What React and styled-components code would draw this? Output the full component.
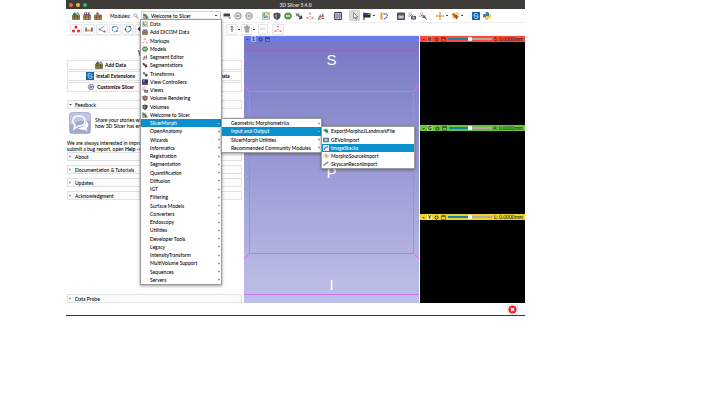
import React from "react";
import styled, { createGlobalStyle, css } from "styled-components";

const Global = createGlobalStyle`
  *, *::before, *::after { box-sizing: border-box; }
  body { margin: 0; background: #fff; color: #000; font: 500 5px/6px Lato, "Noto Sans", sans-serif; }
  button, input { font: inherit; color: inherit; margin: 0; padding: 0; border: 0; background: none; }
  ul { margin: 0; padding: 0; list-style: none; }
  svg { display: block; flex: none; }
  p { margin: 0; }
`;

const Page = styled.div`
  min-height: 100vh;
  display: grid;
  padding: 0 195px 89px 66px;
`;
const Window = styled.div`
  display: grid;
  grid-template-rows: 9px 14px 13px 1fr 12px;
  grid-template-columns: minmax(0, 1fr);
  border-bottom: 1px solid #3b352f;
`;
const TitleBar = styled.header`
  position: relative;
  display: flex;
  align-items: center;
  justify-content: center;
  background: #3d3c39;
  color: #d4d3cf;
  font-weight: 700;
`;
const Lights = styled.div`
  position: absolute;
  left: 3px;
  display: flex;
  gap: 3px;
`;
const Light = styled.i`
  width: 4px;
  height: 4px;
  border-radius: 50%;
  background: ${(p) => p.$color};
`;
const Toolbar = styled.div`
  display: flex;
  align-items: center;
  padding-left: ${(p) => p.$inset}px;
  gap: ${(p) => p.$gap}px;
  border-bottom: 1px solid #f0f0f0;
`;
const Group = styled.div`
  display: flex;
  align-items: center;
  gap: ${(p) => p.$gap ?? 2}px;
  margin-right: ${(p) => p.$after ?? 0}px;
`;
const ModulesLabel = styled.span`
  width: 21px;
`;
const Tool = styled.button`
  display: grid;
  place-items: center;
  flex: none;
  width: ${(p) => p.$width ?? 9}px;
  height: 11px;
  border-radius: 1px;
  ${(p) => p.$pressed && css`background: #dedede; border: 1px solid #d2d2d2;`}
  ${(p) => p.$framed && css`border: 1px solid #e6e6e6; background: #fdfdfd;`}
`;
const Caret = styled.i`
  width: 2px;
  height: 1px;
  background: #444;
`;
const ModulePicker = styled.div`
  position: relative;
  width: 80px;
`;
const PickerButton = styled.button`
  display: flex;
  align-items: center;
  gap: 2px;
  width: 100%;
  height: 9px;
  padding: 0 3px 0 1px;
  border: 1px solid #d5d5d5;
  span { flex: 1; text-align: left; }
`;
const Menu = styled.ul`
  position: absolute;
  z-index: ${(p) => (p.$sub ? 3 : 2)};
  left: ${(p) => (p.$sub ? "100%" : "-1px")};
  top: ${(p) => (p.$sub ? "-1px" : "8px")};
  width: ${(p) => p.$width}px;
  height: ${(p) => p.$height}px;
  display: grid;
  grid-auto-rows: minmax(0, 1fr);
  border: 1px solid #9b9b9b;
  background: #fff;
  box-shadow: 0 1px 3px rgba(0, 0, 0, 0.4);
`;
const Row = styled.li`
  position: relative;
  display: grid;
`;
const MenuButton = styled.button`
  display: grid;
  grid-template-columns: 6px 1fr 2px;
  align-items: center;
  column-gap: 2px;
  min-height: 0;
  height: 100%;
  padding: 0 1px;
  text-align: left;
  white-space: nowrap;
  color: ${(p) => (p.$active ? "#fff" : "#000")};
  background: ${(p) => (p.$active ? "#0a90cd" : "transparent")};
`;
const Main = styled.main`
  display: grid;
  grid-template-columns: 177fr 175fr 105fr;
  column-gap: 1px;
  min-height: 0;
`;
const Panel = styled.aside`
  display: flex;
  flex-direction: column;
  min-width: 0;
  overflow: hidden;
  padding: 13px 1px 0 1px;
`;
const Heading = styled.h1`
  margin: 0 0 3px;
  font: 700 8px/8px Lato, sans-serif;
  color: #4a4a9c;
  text-align: center;
`;
const ButtonGrid = styled.div`
  display: grid;
  grid-template-columns: 1fr 1fr;
  gap: 1px;
  margin-bottom: 8px;
`;
const PushButton = styled.button`
  display: flex;
  align-items: center;
  justify-content: center;
  gap: 2px;
  height: 10px;
  border: 1px solid #e2e2e2;
  font-weight: 700;
  white-space: nowrap;
`;
const Section = styled.button`
  display: flex;
  align-items: center;
  gap: 3px;
  flex: none;
  height: 9px;
  padding-left: 1px;
  margin-bottom: ${(p) => p.$after ?? 4}px;
  margin-top: ${(p) => (p.$last ? "auto" : "0")};
  border: 1px solid #e2e2e2;
  background: #fcfcfc;
`;
const Story = styled.div`
  display: flex;
  gap: 4px;
  align-items: center;
  padding-left: 2px;
  margin: 3px 0 6px;
  white-space: nowrap;
`;
const Note = styled.p`
  white-space: nowrap;
`;
const View3D = styled.section`
  display: grid;
  grid-template-rows: 6px 1fr;
  background: linear-gradient(#7677c3, #bfc0e8);
`;
const ViewBar = styled.header`
  display: flex;
  align-items: center;
  gap: 2px;
  padding: 0 2px;
  font-weight: 500;
  background: ${(p) => p.$color};
  color: #222;
  overflow: hidden;
  white-space: nowrap;
`;
const Tag = styled.b`
  padding: 0 1px;
  background: ${(p) => p.$color};
  color: ${(p) => p.$ink ?? "#222"};
  line-height: 6px;
`;
const Scene = styled.div`
  position: relative;
  svg { position: absolute; inset: 0; width: 100%; height: 100%; }
`;
const Letter = styled.span`
  position: absolute;
  left: 0;
  right: 0;
  top: ${(p) => p.$top}%;
  text-align: center;
  color: #fff;
  font: 15px/16px "Liberation Sans", sans-serif;
`;
const Slices = styled.div`
  display: grid;
  grid-template-rows: repeat(3, 1fr);
  min-width: 0;
`;
const Slice = styled.section`
  display: grid;
  grid-template-rows: 6px 1fr;
  background: #000;
  min-width: 0;
`;
const Slider = styled.input`
  appearance: none;
  flex: 1;
  min-width: 0;
  height: 6px;
  &::-webkit-slider-runnable-track {
    height: 2px;
    background: linear-gradient(90deg, #1583b0 50%, #b5aaa2 50%);
  }
  &::-webkit-slider-thumb {
    appearance: none;
    width: 4px;
    height: 4px;
    margin-top: -1px;
    border-radius: 1px;
    background: #fff;
    border: 0;
  }
`;
const Status = styled.footer`
  display: flex;
  align-items: center;
  justify-content: flex-end;
  padding-right: 7px;
`;

const drawings = {
  crate: (
    <>
      <path d="M1 6h14v9H1z" fill="#a98a4c" stroke="#3f3a22" />
      <path d="M1 9h14M1 12h14M5 6v9M11 6v9" stroke="#4d4020" />
      <path d="M4 1h3v2h2v3H7v2H4V6H2V3h2z" fill="#277b48" />
      <path d="M9 4l3-3 2 5" stroke="#49432b" fill="#bda878" />
    </>
  ),
  dcm: (
    <>
      <path d="M1 6h14v9H1z" fill="#b99a62" stroke="#3f2f32" />
      <path d="M1 10h14M5 6v9M11 6v9" stroke="#4d3030" />
      <path d="M2 1h12v5H2z" fill="#75596e" />
      <path d="M4 3h2m2 0h2m2 0h1" stroke="#fff" strokeWidth="2" />
    </>
  ),
  crateRed: (
    <>
      <path d="M1 6h14v9H1z" fill="#b58850" stroke="#4b3522" />
      <path d="M1 10h14M5 6v9M11 6v9" stroke="#54351f" />
      <path d="M7 0l4 4H9v4H5V4H3z" fill="#b35b3b" />
    </>
  ),
  lens: (
    <>
      <circle cx="6" cy="6" r="4" fill="#d9efff" stroke="#83afd4" strokeWidth="2" />
      <path d="M9 9l5 5" stroke="#b28869" strokeWidth="3" />
    </>
  ),
  slicer: (
    <>
      <path d="M1 1c8 0 14 6 14 14h-4C11 9 7 5 1 5z" fill="#76b44a" />
      <path d="M1 4c6 0 11 5 11 11H8c0-4-3-7-7-7z" fill="#2572b5" />
      <path d="M1 8c4 0 7 3 7 7H1z" fill="#e59a3b" />
      <path d="M1 1v14h5" fill="none" stroke="#555" />
    </>
  ),
  history: (
    <>
      <path d="M1 3h13v6H1z" fill="#444" />
      <path d="M1 12h9" stroke="#ccc" strokeWidth="1" />
      <path d="M11 11h5l-2 3z" fill="#333" />
    </>
  ),
  back: (
    <>
      <circle cx="8" cy="8" r="6.5" fill="#f4f4f4" stroke="#8d8d8d" strokeWidth="2" />
      <path d="M12 8H5m3-3L5 8l3 3" fill="none" stroke="#888" strokeWidth="2" />
    </>
  ),
  forward: (
    <>
      <circle cx="8" cy="8" r="6.5" fill="#f4f4f4" stroke="#8d8d8d" strokeWidth="2" />
      <path d="M4 8h7M8 5l3 3-3 3" fill="none" stroke="#888" strokeWidth="2" />
    </>
  ),
  data: (
    <>
      <path d="M1 1h14v14H1z" fill="#dce8e2" stroke="#7b8d86" />
      <path d="M3 3h3v3H3zM6 9h3v3H6z" fill="#4d9254" />
      <path d="M4 5v6h4M8 7l5 5" stroke="#477ab0" fill="none" strokeWidth="2" />
      <path d="M9 2h5v4H9z" fill="#e4cf58" />
    </>
  ),
  shield: (
    <>
      <path d="M1 3l7-2 7 2v5c0 4-3 6-7 8-4-2-7-4-7-8z" fill="#4b4f51" />
      <path d="M4 5l4-1v9C5 11 4 9 4 8z" fill="#8b9092" />
    </>
  ),
  volr: (
    <>
      <path d="M1 3l7-2 7 2v5c0 4-3 6-7 8-4-2-7-4-7-8z" fill="#8b4a3e" />
      <circle cx="8" cy="7" r="4" fill="#e3b199" />
      <path d="M8 4v6" stroke="#395c8d" strokeWidth="3" />
    </>
  ),
  model: (
    <>
      <path d="M4 2h8l4 6-4 6H4L0 8z" fill="#5c9a54" stroke="#3c6a38" />
      <path d="M4 6h8v4H4z" fill="#b6dbab" />
    </>
  ),
  transform: (
    <>
      <path d="M1 3l7-1 1 6-6 1z" fill="#8a8f90" />
      <path d="M7 8l7-1 1 6-6 2z" fill="#3d4243" />
      <path d="M4 5l7 6" stroke="#777a7c" strokeWidth="3" />
    </>
  ),
  dots: (
    <>
      <circle cx="8" cy="3" r="2.2" fill="#f08080" />
      <circle cx="3" cy="12" r="2.2" fill="#f08080" />
      <circle cx="13" cy="12" r="2.2" fill="#f08080" />
      <path d="M7 9h3M7 13h2" stroke="#e9a3a3" strokeWidth="2" />
    </>
  ),
  dotsRed: (
    <>
      <circle cx="8" cy="4" r="3" fill="#e4213b" />
      <circle cx="3" cy="12" r="3" fill="#e4213b" />
      <circle cx="13" cy="12" r="3" fill="#e4213b" />
    </>
  ),
  editor: (
    <>
      <path d="M2 12l5-8 2 7z" fill="#d8545a" />
      <path d="M8 11l4-10 2 9z" fill="#6280b8" />
      <path d="M2 14h5" stroke="#3a9f58" strokeWidth="3" />
      <path d="M9 13h5" stroke="#c44" strokeWidth="2" />
    </>
  ),
  seg: (
    <>
      <path d="M1 2l6 1 2 5-6 1z" fill="#3a7d49" />
      <path d="M6 7l6-1 3 6-6 3z" fill="#a33" />
      <path d="M3 4l9 8" stroke="#222" strokeWidth="2" />
    </>
  ),
  layout: (
    <>
      <path d="M1 1h14v14H1z" fill="#c3c9df" stroke="#43475f" strokeWidth="2" />
      <path d="M1 6h14M1 10h14M6 1v14M11 1v14" stroke="#565e86" />
    </>
  ),
  pointer: <path d="M5 1v12l3-3 2 5 2-1-2-4h4z" fill="#fff" stroke="#333" />,
  flag: (
    <>
      <path d="M1 2h14v9H1z" fill="#18351f" />
      <path d="M2 3h5v4H2z" fill="#3553d0" />
      <path d="M9 3h5v3H9z" fill="#72a63c" />
      <path d="M2 1v15" stroke="#222" strokeWidth="2" />
    </>
  ),
  roi: (
    <>
      <path d="M1 1h4v14H1z" fill="#e79b22" />
      <path d="M7 5c5-4 9 0 7 4s-7 5-7 5" fill="none" stroke="#6b74bd" strokeWidth="3" strokeDasharray="3 1" />
    </>
  ),
  camera: (
    <>
      <path d="M1 2h14v13H1z" fill="#717789" stroke="#464b56" strokeWidth="2" />
      <path d="M1 4h14" stroke="#454a54" strokeWidth="2" />
      <circle cx="5.500" cy="10" r="2" fill="none" stroke="#fff" strokeWidth="1.500" />
      <circle cx="10.500" cy="10" r="2" fill="none" stroke="#fff" strokeWidth="1.500" />
    </>
  ),
  scene: (
    <>
      <path d="M2 10V2h6" fill="none" stroke="#777" />
      <path d="M3 9l4-4 2 3" stroke="#bc4d5b" fill="none" strokeWidth="2" />
      <path d="M6 8h10v7H6z" fill="#5a5c63" />
      <circle cx="11" cy="11" r="2" fill="#c6c9cf" />
    </>
  ),
  restore: (
    <>
      <path d="M2 10V2h6" fill="none" stroke="#777" />
      <path d="M3 9l4-4 2 3" stroke="#bc4d5b" fill="none" strokeWidth="2" />
      <path d="M7 7h6v5H7z" fill="#6b6c78" />
      <path d="M12 11l3 4" stroke="#333" strokeWidth="2" />
    </>
  ),
  cross: <path d="M8 0v16M0 8h16" stroke="#e8a660" strokeWidth="3" />,
  cubes: (
    <>
      <path d="M1 5l5-4 4 4-4 5z" fill="#e2702c" />
      <path d="M6 9l5-4 4 4-4 6z" fill="#c23b25" />
      <path d="M2 10h4v4M10 2h4v4" fill="none" stroke="#e5a82f" strokeWidth="2" />
      <path d="M6 6l4 4" stroke="#3c8a49" strokeWidth="3" />
    </>
  ),
  ext: (
    <>
      <path d="M0 0h16v16H0z" fill="#1565a8" />
      <path d="M4 4c3-2 7-1 8 2M12 12c-3 2-7 1-8-2M4 4v4h4M12 12V8H8" fill="none" stroke="#9edcf5" strokeWidth="2" />
    </>
  ),
  python: (
    <>
      <path d="M5 0h5l2 2v6H6v3H1L0 8l1-4h6V3H5z" fill="#3a78ad" />
      <path d="M11 16H6l-2-2v-3h3V8h5V4h3l1 4-1 4H9v1h2z" fill="#f5c931" />
    </>
  ),
  gear: (
    <>
      <circle cx="8" cy="8" r="5" fill="#dce0ed" stroke="#7a82a8" strokeWidth="3" strokeDasharray="3 1" />
      <circle cx="8" cy="8" r="2" fill="#5c6590" />
    </>
  ),
  line: (
    <>
      <path d="M2 11h12" stroke="#e5ab43" strokeWidth="4" />
      <path d="M2 5v8M14 5v8" stroke="#4d5c9b" strokeWidth="3" />
    </>
  ),
  angle: (
    <>
      <path d="M13 2L3 9l10 5" fill="none" stroke="#89a2cf" strokeWidth="2" />
      <circle cx="13" cy="13" r="2" fill="#d33" />
      <circle cx="3" cy="9" r="2" fill="#d66" />
    </>
  ),
  curve: (
    <>
      <path d="M3 12C1 3 8 1 13 4M13 5c2 6-3 10-9 8" fill="none" stroke="#4d94c4" strokeWidth="2" strokeDasharray="4 1" />
      <circle cx="4" cy="4" r="1.600" fill="#456" />
      <circle cx="12" cy="12" r="1.600" fill="#456" />
    </>
  ),
  closed: (
    <>
      <path d="M4 4c4-3 9-1 10 3s-3 7-7 7-6-6-3-10z" fill="none" stroke="#3f87b5" strokeWidth="2" />
      <circle cx="12" cy="3" r="1.700" fill="#345" />
      <circle cx="3" cy="9" r="1.700" fill="#345" />
    </>
  ),
  plane: <path d="M1 8l7-7 7 7-7 7z" fill="#33383c" />,
  arrows: (
    <>
      <path d="M8 2v12M5 5l3-3 3 3" fill="none" stroke="#777" strokeWidth="2" />
      <path d="M5 9h6" stroke="#999" strokeWidth="2" />
    </>
  ),
  trash: (
    <>
      <path d="M3 5h10l-1 10H4z" fill="#9a9a9a" />
      <path d="M2 4h12M6 2h4" stroke="#777" strokeWidth="2" />
      <path d="M6 7v6M10 7v6" stroke="#ddd" />
    </>
  ),
  ellipsis: <path d="M2 8h3m1 0h3m1 0h2" stroke="#b9b9b9" strokeWidth="2" />,
  viewctl: (
    <>
      <path d="M0 1h16v14H0z" fill="#26356e" />
      <path d="M0 10h16v5H0z" fill="#8f3550" />
      <path d="M3 4h4v3H3z" fill="#c9d1ef" />
    </>
  ),
  plus: (
    <>
      <path d="M7 2v9M1 6h12" stroke="#2e9b49" strokeWidth="4" />
      <path d="M8 8h7l-5 7z" fill="#2b62a0" />
    </>
  ),
  vol: (
    <>
      <path d="M0 2h16v12H0z" fill="#4d7898" />
      <path d="M4 5h8v6H4z" fill="#bdd5df" />
    </>
  ),
  stack: (
    <>
      <path d="M0 0h16v16H0z" fill="#e9e7f1" />
      <path d="M3 13l3-6 4-1 3-4" fill="none" stroke="#7a6f9e" strokeWidth="3" />
    </>
  ),
  source: (
    <>
      <circle cx="8" cy="8" r="6" fill="#f5edd8" stroke="#d8a889" strokeDasharray="4 2" strokeWidth="2" />
      <path d="M8 4v5h3" fill="none" stroke="#666" strokeWidth="2" />
    </>
  ),
  scan: <path d="M2 13l4-6 4-1 4-4" fill="none" stroke="#8c8aa5" strokeWidth="4" />,
};

const Icon = ({ name, size = 8 }) => (
  <svg width={size} height={size} viewBox="0 0 16 16" fill="none" aria-hidden="true">
    {drawings[name]}
  </svg>
);
const Chevron = ({ down }) => (
  <svg width="3" height="3" viewBox="0 0 6 6" fill="currentColor" opacity="0.7" aria-hidden="true">
    {down ? <path d="M0 2h6L3 5z" /> : <path d="M1 1l3 2-3 2z" />}
  </svg>
);
const Tools = ({ names, ...rest }) => (
  <Group {...rest}>
    {names.map((n) => (
      <Tool key={n} aria-label={n}><Icon name={n} /></Tool>
    ))}
  </Group>
);

const exportItems = [
  { label: "ExportMorphoJLandmarkFile", icon: "plus" },
  { label: "GEVolImport", icon: "vol" },
  { label: "ImageStacks", icon: "stack", active: true },
  { label: "MorphoSourceImport", icon: "source" },
  { label: "SkyscanReconImport", icon: "scan" },
];
const morphItems = [
  { label: "Geometric Morphometrics", more: true },
  { label: "Input and Output", more: true, active: true, items: exportItems, width: 94, height: 43 },
  { label: "SlicerMorph Utilities", more: true },
  { label: "Recommended Community Modules", more: true },
];
const folders = [
  "OpenAnatomy", "Wizards", "Informatics", "Registration", "Segmentation", "Quantification", "Diffusion",
  "IGT", "Filtering", "Surface Models", "Converters", "Endoscopy", "Utilities", "Developer Tools", "Legacy",
  "IntensityTransform", "MultiVolume Support", "Sequences", "Servers",
];
const moduleItems = [
  { label: "Data", icon: "data" },
  { label: "Add DICOM Data", icon: "dcm" },
  { label: "Markups", icon: "dots" },
  { label: "Models", icon: "model" },
  { label: "Segment Editor", icon: "editor" },
  { label: "Segmentations", icon: "seg" },
  { label: "Transforms", icon: "transform" },
  { label: "View Controllers", icon: "viewctl" },
  { label: "Views", icon: "scene" },
  { label: "Volume Rendering", icon: "volr" },
  { label: "Volumes", icon: "shield" },
  { label: "Welcome to Slicer", icon: "slicer" },
  { label: "SlicerMorph", more: true, active: true, items: morphItems, width: 101, height: 35 },
  ...folders.map((label) => ({ label, more: true })),
];

const ModuleMenu = ({ items, ...rest }) => (
  <Menu role="menu" {...rest}>
    {items.map((it) => (
      <Row key={it.label} role="none">
        <MenuButton role="menuitem" $active={it.active}>
          {it.icon ? <Icon name={it.icon} size={6} /> : <i />}
          <span>{it.label}</span>
          {it.more && <Chevron />}
        </MenuButton>
        {it.items && <ModuleMenu items={it.items} $sub $width={it.width} $height={it.height} />}
      </Row>
    ))}
  </Menu>
);

const slices = [
  { id: "R", color: "#fb4b38", tag: "#f9705f", text: "S: 0.0000mm" },
  { id: "G", color: "#63c63b", tag: "#80dc59", text: "A: 0.0000mm" },
  { id: "Y", color: "#ecd32d", tag: "#f8ec7c", text: "L: 0.0000mm" },
];

const PinIcon = () => (
  <svg width="12" height="5" viewBox="0 0 24 10" fill="none" aria-hidden="true">
    <circle cx="5" cy="5" r="3" stroke="#333" strokeWidth="2" />
    <path d="M15 2h8v7h-8z" stroke="#333" />
    <path d="M15 1h8v2h-8z" fill="#222" />
  </svg>
);

export default function App() {
  return (
    <Page>
      <Global />
      <Window>
        <TitleBar>
          <Lights>
            <Light $color="#f4605a" />
            <Light $color="#f0b92f" />
            <Light $color="#35c24a" />
          </Lights>
          3D Slicer 5.4.0
        </TitleBar>

        <Toolbar $inset={5} $gap={0}>
          <Tools names={["crate", "dcm", "crateRed"]} $gap={2} $after={8} />
          <Group $gap={1} $after={1}>
            <ModulesLabel id="modules-label">Modules:</ModulesLabel>
            <Tool $width={8} aria-label="Find module"><Icon name="lens" size={6} /></Tool>
            <ModulePicker>
              <PickerButton aria-haspopup="menu" aria-labelledby="modules-label">
                <Icon name="slicer" size={6} />
                <span>Welcome to Slicer</span>
                <Caret />
              </PickerButton>
              <ModuleMenu items={moduleItems} $width={82} $height={266} />
            </ModulePicker>
          </Group>
          <Tools names={["history", "back", "forward"]} $gap={2} $after={8} />
          <Tools names={["data", "shield", "model", "transform", "dots", "editor"]} $gap={2} $after={8} />
          <Tools names={["layout"]} $after={7} />
          <Group $after={4}>
            <Tool $pressed $width={11} aria-label="Select"><Icon name="pointer" /></Tool>
            <Tool aria-label="Place"><Icon name="flag" /></Tool>
            <Caret />
          </Group>
          <Tools names={["roi"]} $after={8} />
          <Tools names={["camera", "scene", "restore"]} $gap={2} $after={8} />
          <Group $after={8}>
            <Tool aria-label="Crosshair"><Icon name="cross" /></Tool>
            <Caret />
            <Tool aria-label="Cubes"><Icon name="cubes" /></Tool>
            <Caret />
          </Group>
          <Tools names={["ext", "python"]} $gap={2} />
        </Toolbar>

        <Toolbar $inset={4} $gap={1}>
          <Group $gap={1} $after={78}>
            {["dotsRed", "line", "angle", "curve", "closed", "plane"].map((n) => (
              <Tool key={n} $framed $width={12} aria-label={n}><Icon name={n} /></Tool>
            ))}
          </Group>
          <Group $gap={1}>
            <Tool $framed aria-label="Adjust" $width={11}><Icon name="arrows" /></Tool>
            <Caret />
          </Group>
          <Group $gap={1} $after={2}>
            <Tool $framed aria-label="Delete" $width={11}><Icon name="trash" /></Tool>
            <Caret />
          </Group>
          <Group $gap={1} $after={3}>
            <Tool $framed aria-label="More" $width={10}><Icon name="ellipsis" /></Tool>
          </Group>
          <Tool $framed $width={12} aria-label="Points"><Icon name="dots" /></Tool>
        </Toolbar>

        <Main>
          <Panel>
            <Heading>Welcome</Heading>
            <ButtonGrid>
              <PushButton><Icon name="crate" />Add Data</PushButton>
              <PushButton aria-label="Add DICOM data" />
              <PushButton><Icon name="ext" />Install Extensions</PushButton>
              <PushButton><Icon name="data" />Download Sample Data</PushButton>
              <PushButton><Icon name="gear" />Customize Slicer</PushButton>
              <PushButton aria-label="Explore" />
            </ButtonGrid>
            <Section $after={0}><Chevron down />Feedback</Section>
            <Story>
              <svg width="22" height="22" viewBox="0 0 44 44" aria-hidden="true">
                <rect x="1" y="1" width="42" height="42" rx="5" fill="#a5a9d0" stroke="#8f93bd" />
                <path d="M2 6q0-4 5-4h30q5 0 5 4v12Q22 14 2 26z" fill="#c3c6e2" />
                <path d="M19 8c8 0 13 4 13 10s-5 10-13 10l-9 6 2-8C4 20 7 8 19 8z" fill="none" stroke="#fff" strokeWidth="3" />
                <path d="M34 18c6 4 6 11 1 15l2 6-7-4c-5 1-9 0-12-3 8 0 16-4 16-14z" fill="#fff" />
              </svg>
              <p>Share your stories with<br />how 3D Slicer has enabled</p>
            </Story>
            <Note>We are always interested in improving<br />submit a bug report, open <b>Help -&gt;</b></Note>
            <Section><Chevron />About</Section>
            <Section><Chevron />Documentation &amp; Tutorials</Section>
            <Section><Chevron />Updates</Section>
            <Section><Chevron />Acknowledgment</Section>
            <Section $last $after={0}><Chevron />Data Probe</Section>
          </Panel>

          <View3D>
            <ViewBar $color="#6c7af0">
              <Chevron down />
              <Tag $color="#a9b2f6">1</Tag>
              <PinIcon />
            </ViewBar>
            <Scene>
              <svg viewBox="0 0 175 261" preserveAspectRatio="none" fill="none" stroke="#c873e6" strokeWidth="1" aria-hidden="true">
                <path d="M0 8.500H175" stroke="#9464c4" shapeRendering="crispEdges" />
                <path d="M5.500 49.500H169.500V211.500H5.500zM0 252.500H175" shapeRendering="crispEdges" />
                <path d="M0 217L5.500 211.500M175 217L169.500 211.500M0 44L5.500 49.500M175 44L169.500 49.500" />
              </svg>
              <Letter $top={4}>S</Letter>
              <Letter $top={47}>P</Letter>
              <Letter $top={90}>I</Letter>
            </Scene>
          </View3D>

          <Slices>
            {slices.map((s) => (
              <Slice key={s.id}>
                <ViewBar $color={s.color}>
                  <Chevron down />
                  <Tag $color={s.tag}>{s.id}</Tag>
                  <PinIcon />
                  <Slider type="range" defaultValue="50" aria-label={`${s.id} slice offset`} />
                  <span>{s.text}</span>
                </ViewBar>
              </Slice>
            ))}
          </Slices>
        </Main>

        <Status>
          <Tool $framed $width={11} aria-label="Errors">
            <svg width="9" height="9" viewBox="0 0 18 18" aria-hidden="true">
              <circle cx="9" cy="9" r="8" fill="#ee1c25" />
              <path d="M6 6l6 6M12 6l-6 6" stroke="#fff" strokeWidth="3" />
            </svg>
          </Tool>
        </Status>
      </Window>
    </Page>
  );
}
